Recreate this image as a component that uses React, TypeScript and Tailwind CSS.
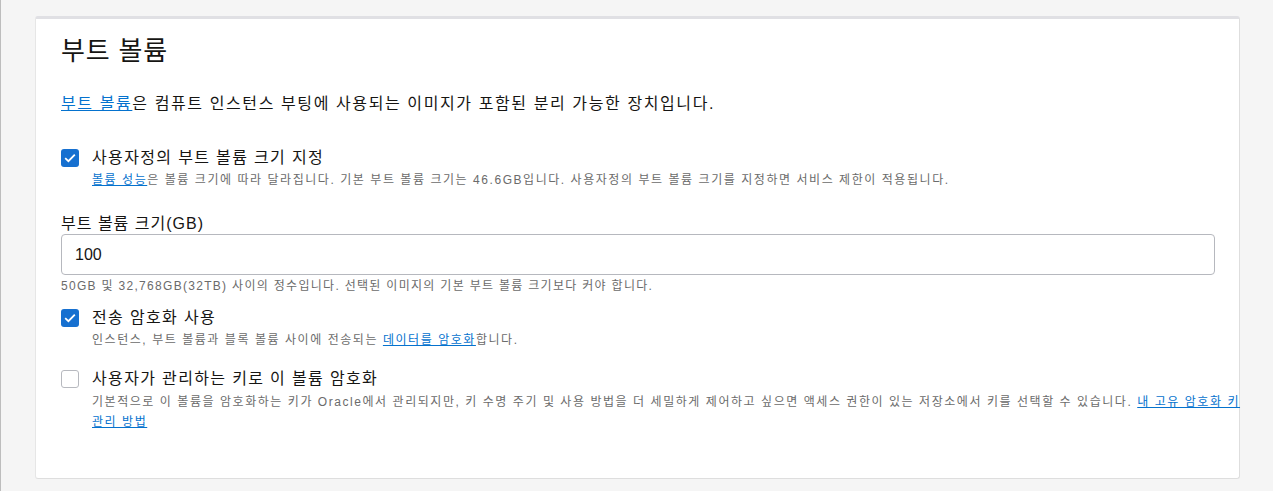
import React, { useState } from "react";

const font = "font-['Liberation_Sans','Noto_Sans_CJK_KR',sans-serif]";

function CheckBox(props: { checked: boolean; onChange: () => void }) {
  return (
    <button
      onClick={props.onChange}
      className={
        props.checked
          ? "mt-[1px] flex h-[18px] w-[18px] shrink-0 items-center justify-center rounded-[3px] bg-[#1670d0]"
          : "mt-[1px] flex h-[18px] w-[18px] shrink-0 items-center justify-center rounded-[3px] border border-[#b7b9bf] bg-white"
      }
    >
      {props.checked && (
        <svg width="12" height="10" viewBox="0 0 12 10" fill="none">
          <path d="M1.2 5.2 L4.4 8.2 L10.8 1.6" stroke="white" strokeWidth="1.8" />
        </svg>
      )}
    </button>
  );
}

export default function App() {
  const [custom, setCustom] = useState(true);
  const [transit, setTransit] = useState(true);
  const [ownKey, setOwnKey] = useState(false);
  const [size, setSize] = useState("100");

  return (
    <div className={`${font} h-[491px] w-full overflow-hidden border-l border-[#bdbdbd] bg-[#f5f5f5] pl-[34px] pr-[33px] pt-[16px] text-[#161513]`}>
      <div className="h-[463px] rounded-[3px] border-t-[3px] border-r border-b border-l border-t-[#e0e0e4] border-r-[#dedede] border-b-[#dedede] border-l-[#e6e6e6] bg-white pl-[25px] pr-[24px] pt-[15px]">
        <h2 className="text-[26px] leading-[34px] tracking-[0.8px]">부트 볼륨</h2>

        <p className="mt-[26px] text-[16px] leading-[20px] tracking-[1.6px]">
          <a href="#" className="text-[#0572ce] underline">
            부트 볼륨
          </a>
          은 컴퓨트 인스턴스 부팅에 사용되는 이미지가 포함된 분리 가능한 장치입니다.
        </p>

        <div className="mt-[34px] flex gap-[13px]">
          <CheckBox checked={custom} onChange={() => setCustom(!custom)} />
          <div>
            <div className="text-[16px] leading-[20px] tracking-[1.35px]">사용자정의 부트 볼륨 크기 지정</div>
            <div className="mt-[4px] text-[12px] leading-[16px] tracking-[1.55px] text-[#6b6b6b]">
              <a href="#" className="text-[#0572ce] underline">
                볼륨 성능
              </a>
              은 볼륨 크기에 따라 달라집니다. 기본 부트 볼륨 크기는 46.6GB입니다. 사용자정의 부트 볼륨 크기를 지정하면 서비스 제한이 적용됩니다.
            </div>
          </div>
        </div>

        <label className="mt-[26px] block text-[16px] leading-[20px] tracking-[1px]">부트 볼륨 크기(GB)</label>
        <input
          value={size}
          onChange={(e) => setSize(e.target.value)}
          className="mt-0 h-[41px] w-full rounded-[4px] border border-[#b6b8be] px-[13px] text-[16px] outline-none"
        />
        <div className="mt-[3px] text-[12px] leading-[16px] tracking-[1.3px] text-[#6b6b6b]">
          50GB 및 32,768GB(32TB) 사이의 정수입니다. 선택된 이미지의 기본 부트 볼륨 크기보다 커야 합니다.
        </div>

        <div className="mt-[14px] flex gap-[13px]">
          <CheckBox checked={transit} onChange={() => setTransit(!transit)} />
          <div>
            <div className="text-[16px] leading-[20px] tracking-[1.35px]">전송 암호화 사용</div>
            <div className="mt-[4px] text-[12px] leading-[16px] tracking-[1.55px] text-[#6b6b6b]">
              인스턴스, 부트 볼륨과 블록 볼륨 사이에 전송되는{" "}
              <a href="#" className="text-[#0572ce] underline">
                데이터를 암호화
              </a>
              합니다.
            </div>
          </div>
        </div>

        <div className="mt-[21px] flex gap-[13px]">
          <CheckBox checked={ownKey} onChange={() => setOwnKey(!ownKey)} />
          <div className="w-[1155px] shrink-0">
            <div className="text-[16px] leading-[20px] tracking-[1.35px]">사용자가 관리하는 키로 이 볼륨 암호화</div>
            <div className="mt-[3px] text-[12px] leading-[20px] tracking-[1.55px] text-[#6b6b6b]">
              기본적으로 이 볼륨을 암호화하는 키가 Oracle에서 관리되지만, 키 수명 주기 및 사용 방법을 더 세밀하게 제어하고 싶으면 액세스 권한이 있는 저장소에서 키를 선택할 수 있습니다.{" "}
              <a href="#" className="text-[#0572ce] underline">
                내 고유 암호화 키 관리 방법
              </a>
            </div>
          </div>
        </div>
      </div>
    </div>
  );
}
